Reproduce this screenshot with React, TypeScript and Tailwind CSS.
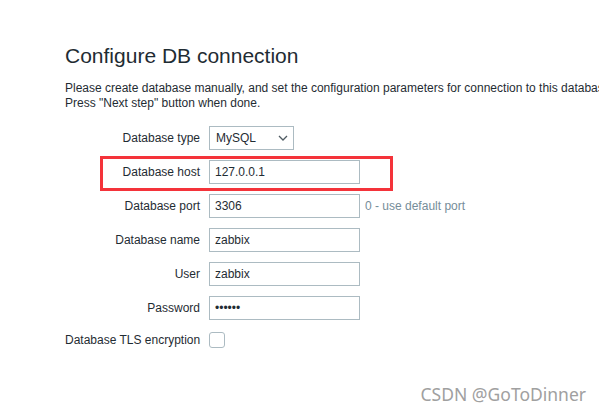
import React from 'react';

const inputCls =
  'h-[24px] w-[151px] border border-[#acbbc2] bg-white px-[5px] text-[12px] text-[#1f2c33] outline-none';

function Row({ label, children, extra }: { label: string; children: React.ReactNode; extra?: React.ReactNode }) {
  return (
    <div className="relative flex h-[24px] items-center">
      <div className="w-[135px] shrink-0 whitespace-nowrap text-right">{label}</div>
      <div className="ml-[9px] flex items-center">{children}</div>
      {extra}
    </div>
  );
}

export default function App() {
  return (
    <div
      className="relative h-[412px] w-[599px] overflow-hidden bg-white text-[12px] text-[#1f2c33]"
      style={{ fontFamily: '"Liberation Sans", Arial, sans-serif' }}
    >
      <div className="pl-[65px] pt-[44px]">
        <h1 className="whitespace-nowrap text-[21px] leading-[24px] text-[#1f2c33]">Configure DB connection</h1>
        <div className="mt-[13px] whitespace-nowrap leading-[15px]">
          <p>Please create database manually, and set the configuration parameters for connection to this database.</p>
          <p>Press "Next step" button when done.</p>
        </div>

        <div className="mt-[15px] flex flex-col gap-[10px]">
          <Row label="Database type">
            <div className="flex h-[24px] w-[85px] items-center justify-between border border-[#acbbc2] bg-white pl-[6px] pr-[5px]">
              <span>MySQL</span>
              <svg width="10" height="6" viewBox="0 0 10 6" className="text-[#4f5b62]">
                <path d="M1 1 L5 5 L9 1" fill="none" stroke="currentColor" strokeWidth="1.3" />
              </svg>
            </div>
          </Row>
          <Row
            label="Database host"
            extra={<div className="absolute left-[35px] top-[-4px] h-[35px] w-[293px] border-[3px] border-[#f4333a]" />}
          >
            <input className={inputCls} defaultValue="127.0.0.1" readOnly />
          </Row>
          <Row label="Database port" extra={<span className="ml-[5px] text-[#768d99]">0 - use default port</span>}>
            <input className={inputCls} defaultValue="3306" readOnly />
          </Row>
          <Row label="Database name">
            <input className={inputCls} defaultValue="zabbix" readOnly />
          </Row>
          <Row label="User">
            <input className={inputCls} defaultValue="zabbix" readOnly />
          </Row>
          <Row label="Password">
            <input type="password" className={inputCls} defaultValue="zabbix" readOnly />
          </Row>
          <div className="-mt-[2px]">
            <Row label="Database TLS encryption">
              <div className="h-[16px] w-[16px] rounded-[3px] border border-[#acbbc2] bg-white" />
            </Row>
          </div>
        </div>
      </div>

      <div
        className="absolute right-[13px] top-[381px] whitespace-nowrap text-[17.5px] text-[#a0a0a0]"
        style={{ fontFamily: '"Noto Sans", sans-serif', textShadow: '0 0 1px #fff' }}
      >
        CSDN @GoToDinner
      </div>
    </div>
  );
}
